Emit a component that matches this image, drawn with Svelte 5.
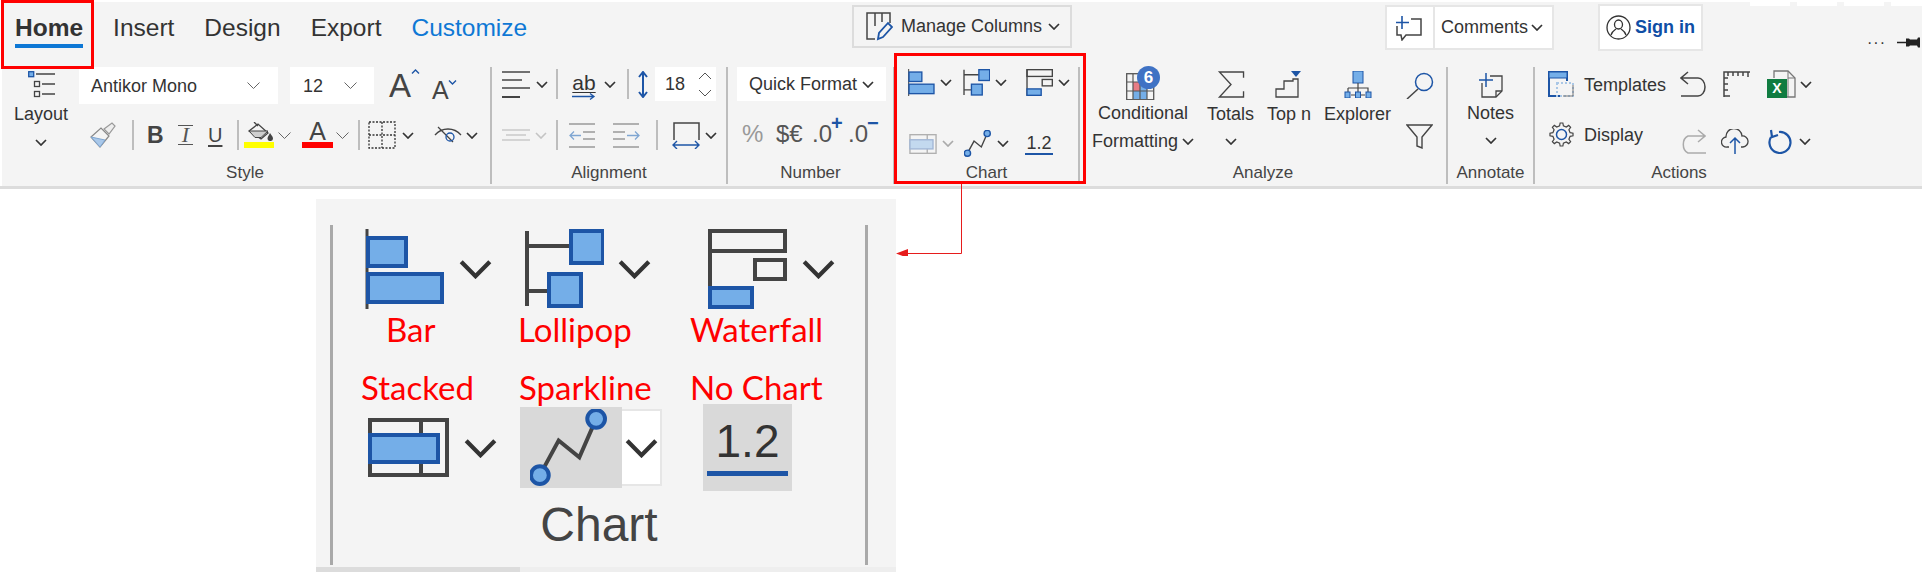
<script>
  const gear = (() => {
    const pts = [];
    const teeth = 8;
    for (let i = 0; i < teeth; i++) {
      const a = (i / teeth) * Math.PI * 2;
      const s = Math.PI / teeth;
      [[a - s * 0.55, 8.8], [a - s * 0.3, 11.6], [a + s * 0.3, 11.6], [a + s * 0.55, 8.8]].forEach(([t, r]) => {
        pts.push(`${(12.5 + r * Math.cos(t)).toFixed(2)} ${(12.5 + r * Math.sin(t)).toFixed(2)}`);
      });
    }
    return 'M' + pts.join('L') + 'Z';
  })();
</script>

{#snippet chev(cls = '')}
  <svg class="chev {cls}" width="12" height="7" viewBox="0 0 12 7"><path d="M1 1l5 5 5-5" /></svg>
{/snippet}

{#snippet thin()}
  <svg class="thinchev" width="13" height="7" viewBox="0 0 13 7"><path d="M.5.5l6 6 6-6" /></svg>
{/snippet}

{#snippet barIcon()}
  <svg viewBox="0 0 80 80">
    <path d="M2 0v80" stroke="#444" stroke-width="3" />
    <rect x="3" y="9" width="38" height="28" class="bl" />
    <rect x="3" y="45" width="74" height="28" class="bl" />
  </svg>
{/snippet}

{#snippet lollipopIcon()}
  <svg viewBox="0 0 80 80">
    <path d="M3 2v75M3 17h44M3 62h22" fill="none" stroke="#444" stroke-width="4" />
    <rect x="47" y="2" width="32" height="32" class="bl" />
    <rect x="25" y="45" width="32" height="32" class="bl" />
  </svg>
{/snippet}

{#snippet waterfallIcon()}
  <svg viewBox="0 0 80 80">
    <path d="M3 1v78" stroke="#444" stroke-width="4" />
    <rect x="3" y="2" width="75" height="20" class="gr" />
    <rect x="48" y="31" width="30" height="19" class="gr" />
    <rect x="3" y="59" width="42" height="19" class="bl" />
  </svg>
{/snippet}

{#snippet stackedIcon()}
  <svg viewBox="0 0 81 59">
    <rect x="2" y="2" width="77" height="55" class="gr" />
    <path d="M53 2v55" stroke="#444" stroke-width="4" />
    <rect x="2" y="17" width="68" height="27" class="bl" />
  </svg>
{/snippet}

{#snippet sparkIcon()}
  <svg viewBox="0 0 78 78">
    <path d="M10 67L29 32 50 49 67 10" fill="none" stroke="#444" stroke-width="4" />
    <circle cx="10" cy="67" r="9" class="bl" />
    <circle cx="67" cy="10" r="9" class="bl" />
  </svg>
{/snippet}

<div class="page">
  <header class="ribbon">
    <div class="topbar">
      <nav class="tabs">
        <span class="tab active">Home</span>
        <span class="tab">Insert</span>
        <span class="tab">Design</span>
        <span class="tab">Export</span>
        <span class="tab custom">Customize</span>
      </nav>
      <button class="manage">
        <svg width="27" height="29" viewBox="0 0 27 29">
          <path d="M9 27H1V1h23v10M9 1v13M16 1v9" fill="none" stroke="#444" stroke-width="1.5" />
          <path d="M12 27l1-6 9-10 4 4-9 10z" fill="#f4f4f4" stroke="#1d55a6" stroke-width="1.8" />
        </svg>
        <span>Manage Columns</span>
        {@render chev()}
      </button>
      <div class="comments">
        <span class="cicon">
          <svg width="28" height="26" viewBox="0 0 28 26">
            <path d="M16 4h10v16H11l-4 5-1-5H2v-9" fill="none" stroke="#444" stroke-width="1.5" />
            <path d="M7 1v13M1 7.500h13" stroke="#1d55a6" stroke-width="1.6" />
          </svg>
        </span>
        <span class="ctext">Comments{@render chev()}</span>
      </div>
      <div class="signin">
        <svg width="25" height="25" viewBox="0 0 25 25" fill="none" stroke="#333" stroke-width="1.3">
          <circle cx="12.500" cy="12.500" r="11.500" />
          <ellipse cx="12.500" cy="9.500" rx="4" ry="4.500" />
          <path d="M5 20c1-4 4-5 5-6M20 20c-1-4-4-5-5-6" />
        </svg>
        <span>Sign in</span>
      </div>
      <div class="more">
        <span class="dots">···</span>
        <svg width="24" height="11" viewBox="0 0 24 11"><path d="M0 5.500h9" stroke="#222" stroke-width="1.5" /><path d="M9 1.500h3l1 1h7l1-2h2v10h-2l-1-2h-7l-1 1H9z" fill="#222" /></svg>
      </div>
    </div>
    <div class="blanks"><i></i><i></i><i></i><i></i></div>

    <div class="groups">
      <section class="group style">
        <div class="gbody stylebody">
          <div class="tool layout">
            <svg width="27" height="27" viewBox="0 0 27 27" fill="none" stroke="#444" stroke-width="1.300">
              <rect x=".7" y=".7" width="5" height="5" fill="#74aee8" stroke="#1d55a6" />
              <path d="M8 3h19M14 13h13M14 23h13" />
              <rect x="6.500" y="10.500" width="5" height="5" />
              <rect x="6.500" y="20.500" width="5" height="5" />
            </svg>
            <span>Layout</span>
            {@render chev()}
          </div>
          <div class="stack">
            <div class="row s1">
              <div class="select font"><span>Antikor Mono</span>{@render thin()}</div>
              <div class="select size"><span>12</span>{@render thin()}</div>
              <span class="grow big">A<svg width="9" height="5" viewBox="0 0 9 5"><path d="M1 4.500l3.500-3.500 3.500 3.500" fill="none" stroke="#1d55a6" stroke-width="1.400" /></svg></span>
              <span class="grow small">A<svg width="9" height="5" viewBox="0 0 9 5"><path d="M1 .5l3.500 3.500 3.500-3.500" fill="none" stroke="#1d55a6" stroke-width="1.400" /></svg></span>
            </div>
            <div class="row s2">
              <svg width="26" height="27" viewBox="0 0 26 27">
                <path d="M1 15l10-9 8 8-9 11z" fill="#f4f4f4" stroke="#888" stroke-width="1.200" />
                <path d="M1 15l14 3-5 7z" fill="#a9c8ea" stroke="#7fa6d2" />
                <path d="M14 7l8-6 3 3-6 8z" fill="#eee" stroke="#999" stroke-width="1.200" />
              </svg>
              <i class="sep"></i>
              <b class="fmt bold">B</b>
              <span class="fmt ital">I</span>
              <span class="fmt under">U</span>
              <i class="sep"></i>
              <span class="swatch">
                <svg width="27" height="19" viewBox="0 0 27 19">
                  <path d="M3 9l9-7 10 9-7 6z" fill="none" stroke="#444" stroke-width="1.300" />
                  <path d="M3 9h19l-7 6.500H9z" fill="#cfcfcf" stroke="#444" />
                  <path d="M8 0l4 4" stroke="#444" stroke-width="1.300" />
                  <path d="M24 11c2 3 3 4 3 5.500a2.700 2.500 0 0 1-5.500 0c0-1.500 1-2.500 2.500-5.500z" fill="#444" />
                </svg>
                <i class="yellow"></i>
              </span>
              {@render thin()}
              <span class="swatch redA">
                <span class="colorA">A</span>
                <i class="red"></i>
              </span>
              {@render thin()}
              <i class="sep"></i>
              <svg width="28" height="28" viewBox="0 0 28 28" fill="none" stroke="#333" stroke-width="1.300" stroke-dasharray="2 1.500">
                <rect x="1" y="1" width="26" height="26" />
                <path d="M14 1v26M1 14h26" />
              </svg>
              {@render chev()}
              <svg width="28" height="18" viewBox="0 0 28 18" fill="none" stroke="#444" stroke-width="1.300">
                <path d="M1 9c7-8 19-8 26 0" />
                <path d="M4 1l15 15" />
                <circle cx="16" cy="11" r="4" stroke="#1d55a6" />
              </svg>
              {@render chev()}
            </div>
          </div>
        </div>
        <footer>Style</footer>
      </section>

      <section class="group">
        <div class="stack">
          <div class="row a1">
            <svg width="28" height="27" viewBox="0 0 28 27" stroke="#444" stroke-width="1.500"><path d="M0 1h28M0 9h20M0 17h28" /><path d="M0 26h18" stroke-width="2" /></svg>
            {@render chev()}
            <i class="sep"></i>
            <span class="ab">ab<svg width="24" height="7" viewBox="0 0 24 7"><path d="M0 3.500h22M18 .5l4 3-4 3" fill="none" stroke="#1d55a6" stroke-width="1.300" /></svg></span>
            {@render chev()}
            <i class="sep"></i>
            <svg width="10" height="27" viewBox="0 0 10 27"><path d="M5 1v25M1 6l4-5 4 5M1 21l4 5 4-5" fill="none" stroke="#1d55a6" stroke-width="2" /></svg>
            <div class="select spin"><span>18</span>
              <svg width="14" height="25" viewBox="0 0 14 25" fill="none" stroke="#555"><path d="M1 7l6-6 6 6M1 18l6 6 6-6" /></svg>
            </div>
          </div>
          <div class="row a2">
            <svg class="faded" width="28" height="12" viewBox="0 0 28 12" stroke="#888" stroke-width="1.500"><path d="M0 1h28M4 6h20M0 11h28" /></svg>
            <svg class="faded" width="12" height="7" viewBox="0 0 12 7"><path d="M1 1l5 5 5-5" fill="none" stroke="#777" stroke-width="1.600" /></svg>
            <i class="sep"></i>
            <svg width="26" height="25" viewBox="0 0 26 25" fill="none"><path d="M0 1h26M0 24h26M14 9h12M14 16h12" stroke="#999" stroke-width="1.400" /><path d="M12 12.500H1M5 8.500l-4 4 4 4" stroke="#7fa6d2" stroke-width="1.300" /></svg>
            <svg width="27" height="25" viewBox="0 0 27 25" fill="none"><path d="M0 1h26M0 24h26M0 9h12M0 16h12" stroke="#999" stroke-width="1.400" /><path d="M14 12.500h12M22 8.500l4 4-4 4" stroke="#7fa6d2" stroke-width="1.300" /></svg>
            <i class="sep"></i>
            <svg width="28" height="27" viewBox="0 0 28 27" fill="none"><path d="M2 18V1h25v17" stroke="#444" stroke-width="1.500" /><path d="M1 23h26M5 19l-4 4 4 4M23 19l4 4-4 4" stroke="#1d55a6" stroke-width="1.400" /></svg>
            {@render chev()}
          </div>
        </div>
        <footer>Alignment</footer>
      </section>

      <section class="group">
        <div class="stack">
          <div class="row n1">
            <div class="select quick"><span>Quick Format</span>{@render chev()}</div>
          </div>
          <div class="row n2">
            <span class="num pct">%</span>
            <span class="num">$€</span>
            <span class="num">.0<b class="sup">+</b></span>
            <span class="num">.0<b class="sup">−</b></span>
          </div>
        </div>
        <footer>Number</footer>
      </section>

      <section class="group">
        <div class="stack chart">
          <div class="row c1">
            <span class="mini">{@render barIcon()}</span>
            {@render chev()}
            <span class="mini">{@render lollipopIcon()}</span>
            {@render chev()}
            <span class="mini">{@render waterfallIcon()}</span>
            {@render chev()}
          </div>
          <div class="row c2">
            <span class="mini stacked faded">{@render stackedIcon()}</span>
            <span class="faded">{@render chev()}</span>
            <span class="mini">{@render sparkIcon()}</span>
            {@render chev()}
            <span class="nochart">1.2</span>
          </div>
        </div>
        <footer>Chart</footer>
      </section>

      <section class="group">
        <div class="gbody analyze">
          <div class="tool">
            <span class="cf">
              <svg width="34" height="30" viewBox="0 0 34 30">
                <rect x=".7" y="3.700" width="27" height="26" fill="#f4f4f4" stroke="#555" stroke-width="1.300" />
                <rect x="7" y="12" width="7" height="9" fill="#e87c85" />
                <rect x="14" y="12" width="7" height="9" fill="#74aee8" />
                <rect x="7" y="21" width="14" height="8" fill="#74aee8" />
                <path d="M7 4v25M14 4v25M21 4v25M1 12h26M1 21h26" stroke="#555" stroke-width="1.200" />
              </svg>
              <b>6</b>
            </span>
            <span>Conditional</span>
            <span class="line2">Formatting{@render chev()}</span>
          </div>
          <div class="tool">
            <svg width="28" height="28" viewBox="0 0 28 28"><path d="M27 7V1H2l12 13L2 27h25v-6" fill="none" stroke="#444" stroke-width="1.400" /></svg>
            <span>Totals</span>
            <span class="line2 c">{@render chev()}</span>
          </div>
          <div class="tool">
            <svg width="28" height="27" viewBox="0 0 28 27"><path d="M1 26V18h8v-8h9v-2h5v18z" fill="none" stroke="#444" stroke-width="1.300" /><path d="M16 0h10l-5 6z" fill="#1d55a6" /></svg>
            <span>Top n</span>
          </div>
          <div class="tool">
            <svg width="28" height="27" viewBox="0 0 28 27">
              <rect x="9" y="0" width="10" height="12" fill="#74aee8" stroke="#1d55a6" />
              <path d="M14 12v9M4 17h20v4M4 17v4" fill="none" stroke="#444" stroke-width="1.200" />
              <path d="M7 24h14" stroke="#444" />
              <rect x="1" y="21" width="5" height="6" fill="#74aee8" stroke="#1d55a6" />
              <rect x="11.500" y="21" width="5" height="6" fill="#74aee8" stroke="#1d55a6" />
              <rect x="22" y="21" width="5" height="6" fill="#74aee8" stroke="#1d55a6" />
            </svg>
            <span>Explorer</span>
          </div>
          <div class="pair">
            <svg width="28" height="27" viewBox="0 0 28 27" fill="none"><circle cx="18" cy="10" r="8.500" stroke="#1d55a6" stroke-width="1.500" /><path d="M12 17L1 27" stroke="#444" stroke-width="1.500" /></svg>
            <svg width="27" height="25" viewBox="0 0 27 25"><path d="M1 1h25L16 13v11l-5-2V13z" fill="#f4f4f4" stroke="#444" stroke-width="1.400" /></svg>
          </div>
        </div>
        <footer>Analyze</footer>
      </section>

      <section class="group">
        <div class="gbody notes">
          <div class="tool">
            <svg width="24" height="25" viewBox="0 0 24 25" fill="none">
              <path d="M11 3h12v15l-6 6H3V10" stroke="#444" stroke-width="1.300" />
              <path d="M23 18h-6v6" stroke="#444" stroke-width="1.300" />
              <path d="M7 0v14M0 7h14" stroke="#1d55a6" stroke-width="1.500" />
            </svg>
            <span>Notes</span>
            <span class="line2 c">{@render chev()}</span>
          </div>
        </div>
        <footer>Annotate</footer>
      </section>

      <section class="group last">
        <div class="stack">
          <div class="row r1">
            <svg width="27" height="26" viewBox="0 0 27 26">
              <path d="M14 25H2V1h18v9" fill="none" stroke="#1d55a6" stroke-width="2" />
              <rect x="2" y="1" width="18" height="6" fill="#74aee8" stroke="#1d55a6" />
              <rect x="10" y="12" width="16" height="13" fill="none" stroke="#aac7e6" stroke-dasharray="2 2" stroke-width="2" />
              <path d="M16 25h10V14" fill="none" stroke="#777" />
            </svg>
            <span class="t">Templates</span>
            <svg width="26" height="26" viewBox="0 0 26 26" fill="none" stroke="#444" stroke-width="1.500"><path d="M8 1L1 7l7 6M1 7h17a7 9 0 0 1 0 18H1" /></svg>
            <svg width="27" height="26" viewBox="0 0 27 26" fill="none" stroke="#444" stroke-width="1.500"><path d="M1 26V1h26M1 25h6M5 1v4M10 1v4M15 1v4M20 1v4M25 1v5M1 7h4M1 13h4M1 19h4" /></svg>
            <span class="excel">
              <svg width="29" height="28" viewBox="0 0 29 28"><path d="M7 8V1h14l7 7v19H8" fill="#f4f4f4" stroke="#777" stroke-width="1.300" /><path d="M21 1v7h7M21 8v19" fill="none" stroke="#777" /></svg>
              <b>X</b>
            </span>
            {@render chev()}
          </div>
          <div class="row r2">
            <svg width="25" height="25" viewBox="0 0 25 25" fill="none" stroke="#444" stroke-width="1.200"><path d={gear} /><circle cx="12.500" cy="12.500" r="5" stroke="#1d55a6" stroke-width="1.500" /></svg>
            <span class="t">Display</span>
            <svg class="low" width="26" height="25" viewBox="0 0 26 25" fill="none" stroke="#aaa" stroke-width="1.500"><path d="M18 1l7 6-7 6M25 7H8a7 9 0 0 0 0 17h18" /></svg>
            <svg class="low" width="28" height="25" viewBox="0 0 28 25" fill="none"><path d="M8 18H6a5 5 0 0 1-1-10 8 8 0 0 1 16-1 5.500 5.500 0 0 1 1 11h-2" stroke="#444" stroke-width="1.300" /><path d="M14 25V9M9 14l5-5 5 5" stroke="#1d55a6" stroke-width="1.500" /></svg>
            <svg class="low" width="25" height="25" viewBox="0 0 25 25" fill="none" stroke="#1d55a6" stroke-width="2.200"><path d="M11 3a10.500 10.500 0 1 1-8 5M3 1l1 7 6-2" /></svg>
            {@render chev('lowchev')}
          </div>
        </div>
        <footer>Actions</footer>
      </section>
    </div>
  </header>

  <section class="zoom">
    <div class="zoomframe">
      <div class="tiles">
        <div class="tile bar">
          <div class="glyphs"><span class="big-i b1">{@render barIcon()}</span>{@render chev('huge')}</div>
          <div class="name lbar">Bar</div>
        </div>
        <div class="tile lol">
          <div class="glyphs"><span class="big-i b1">{@render lollipopIcon()}</span>{@render chev('huge')}</div>
          <div class="name">Lollipop</div>
        </div>
        <div class="tile wat">
          <div class="glyphs"><span class="big-i b1">{@render waterfallIcon()}</span>{@render chev('huge')}</div>
          <div class="name">Waterfall</div>
        </div>
        <div class="tile sta">
          <div class="name">Stacked</div>
          <div class="glyphs tall"><span class="big-i b2">{@render stackedIcon()}</span>{@render chev('huge')}</div>
        </div>
        <div class="tile spa">
          <div class="name">Sparkline</div>
          <div class="glyphs tall">
            <span class="sparkbox">{@render sparkIcon()}</span>
            <span class="sparkchev">{@render chev('huge')}</span>
          </div>
        </div>
        <div class="tile noc">
          <div class="name">No Chart</div>
          <div class="glyphs tall"><span class="numbox">1.2</span></div>
        </div>
      </div>
      <div class="charttitle">Chart</div>
    </div>
    <div class="zoomfoot"></div>
  </section>

  <div class="mark home"></div>
  <div class="mark chartbox"></div>
  <svg class="connector" width="70" height="72" viewBox="0 0 70 72">
    <path d="M65.500 0v69.500H10" fill="none" stroke="#e61c1c" stroke-width="1" />
    <path d="M0 69.500L12 65v9z" fill="#e61c1c" />
  </svg>
</div>

<style>
  :global(body) {
    margin: 0;
    background: #fff;
  }
  .page {
    position: relative;
    width: 1922px;
    height: 572px;
    overflow: hidden;
    font-family: "Liberation Sans", Arial, sans-serif;
    color: #333;
    font-size: 18px;
  }
  .ribbon {
    position: relative;
    top: 2px;
    height: 184px;
    background: #f4f4f4;
    border-bottom: 3px solid #dcdcdc;
    box-shadow: inset 2px 0 #fff;
  }
  .topbar {
    display: grid;
    grid-template-columns: 852px 533px 213px 105px 1fr;
    align-items: start;
    height: 65px;
  }
  .tabs {
    display: flex;
    gap: 30px;
    padding: 12px 0 0 15px;
    font-size: 24.5px;
    line-height: 28px;
  }
  .tab.active {
    font-weight: 700;
    border-bottom: 4px solid #0e78d5;
    padding-bottom: 2px;
    height: 28px;
  }
  .custom {
    color: #0e78d5;
  }
  .manage {
    display: flex;
    align-items: center;
    box-sizing: border-box;
    width: 220px;
    height: 43px;
    margin: 3px 0 0;
    padding: 0 0 0 12px;
    background: #f4f4f4;
    border: 2px solid #dcdcdc;
    font: inherit;
    color: inherit;
  }
  .manage span {
    margin: 0 6px 0 8px;
  }
  .comments {
    display: flex;
    box-sizing: border-box;
    width: 169px;
    height: 45px;
    margin-top: 3px;
    background: #fff;
    border: 2px solid #e6e6e6;
  }
  .cicon {
    display: flex;
    align-items: center;
    padding-left: 8px;
    width: 38px;
    border-right: 2px solid #e6e6e6;
  }
  .ctext {
    display: flex;
    align-items: center;
    gap: 3px;
    padding-left: 6px;
  }
  .signin {
    display: flex;
    align-items: center;
    gap: 4px;
    box-sizing: border-box;
    width: 105px;
    height: 47px;
    margin-top: 2px;
    padding-left: 6px;
    background: #fff;
    border: 2px solid #e6e6e6;
    color: #0f4ea5;
    font-weight: 700;
  }
  .more {
    display: flex;
    align-items: center;
    gap: 11px;
    margin: 35px 0 0 164px;
  }
  .dots {
    font-size: 16px;
    letter-spacing: 1px;
    line-height: 11px;
  }
  .blanks {
    position: absolute;
    top: -2px;
    left: 1750px;
    display: flex;
    gap: 7px;
  }
  .blanks i {
    width: 40px;
    height: 6px;
    background: #fff;
  }
  .groups {
    display: flex;
    height: 117px;
  }
  .group {
    box-sizing: border-box;
    display: flex;
    flex-direction: column;
    border-right: 2px solid #bdbdbd;
    flex: none;
    width: 236px;
  }
  .group:nth-child(1) { width: 492px; }
  .group:nth-child(3) { width: 167px; }
  .group:nth-child(4) { width: 185px; }
  .group:nth-child(5) { width: 368px; }
  .group:nth-child(6) { width: 87px; }
  .group.last { width: 288px; border-right: 0; }
  footer {
    height: 20px;
    margin-top: auto;
    margin-bottom: 1px;
    text-align: center;
    font-size: 17px;
    line-height: 20px;
    color: #444;
  }
  .gbody, .stack {
    display: grid;
  }
  .stylebody {
    grid-template-columns: 79px 1fr;
  }
  .stack {
    align-content: start;
    row-gap: 19px;
  }
  .tool {
    display: flex;
    flex-direction: column;
    align-items: center;
    padding-top: 4px;
    line-height: 20px;
  }
  .tool > svg:not(.chev), .tool > .cf {
    height: 27px;
  }
  .tool > span:not(.cf) {
    margin-top: 6px;
  }
  .tool > :global(.chev) {
    margin-top: 15px;
  }
  .layout {
    padding-left: 14px;
    width: 54px;
  }
  .line2 {
    display: flex;
    align-items: center;
    gap: 4px;
    height: 24px;
    margin-top: 6px !important;
  }
  .line2.c {
    margin-top: 5px !important;
  }
  .row {
    display: grid;
    align-items: center;
    justify-items: start;
  }
  .s1 { grid-template-columns: 211px 99px 43px 1fr; height: 37px; }
  .s1 .select span { padding-top: 2px; }
  .s2 {
    grid-template-columns: 42px 15px 31px 30px 29px 7px 34px 24px 34px 22px 10px 34px 32px 32px 1fr;
    padding-left: 11px;
    height: 30px;
    margin-top: -3px;
  }
  .a1 { grid-template-columns: 34px 20px 16px 32px 23px 11px 17px 1fr; padding-left: 10px; height: 34px; }
  .a2 { grid-template-columns: 33px 21px 13px 44px 43px 16px 33px 1fr; padding-left: 10px; height: 26px; }
  .n1 { padding-left: 9px; height: 34px; }
  .n2 { grid-template-columns: 34px 36px 36px 1fr; padding-left: 14px; height: 26px; }
  .c1 { grid-template-columns: 32px 23px 32px 31px 32px 1fr; padding-left: 13px; height: 27px; margin-top: 2px; }
  .c2 { grid-template-columns: 33px 22px 33px 28px 1fr; padding-left: 14px; height: 27px; }
  .chart { row-gap: 34px; }
  .analyze {
    grid-template-columns: 115px 60px 57px 82px 1fr;
    justify-items: start;
    padding-left: 12px;
  }
  .pair {
    display: flex;
    flex-direction: column;
    gap: 25px;
    padding-top: 5px;
  }
  .notes {
    justify-items: center;
  }
  .notes svg:not(.chev) {
    margin-top: 1px;
  }
  .notes .tool > span:not(.line2) {
    margin-top: 4px;
  }
  .r1 { grid-template-columns: 37px 96px 43px 44px 33px 1fr; padding-left: 12px; height: 28px; margin-top: 3px; }
  .r1 .t { padding-top: 2px; }
  .r2 {
    grid-template-columns: 35px 96px 41px 47px 31px 1fr;
    align-items: start;
    padding-left: 14px;
    height: 32px;
    margin-top: 5px;
  }
  .low { margin-top: 7px; }
  .r2 :global(.lowchev) { margin-top: 16px; }
  .t { line-height: 22px; }
  .r2 .t { margin-top: 2px; }
  .sep {
    display: block;
    width: 2px;
    height: 30px;
    background: #bdbdbd;
  }
  .select {
    display: flex;
    align-items: center;
    justify-content: space-between;
    box-sizing: border-box;
    height: 100%;
    background: #fff;
  }
  .font { width: 199px; padding: 0 18px 0 12px; }
  .size { width: 84px; padding: 0 17px 0 13px; }
  .spin { width: 61px; padding: 0 4px 0 10px; }
  .quick { width: 149px; padding: 0 12px 0 12px; }
  .grow {
    display: flex;
    align-items: flex-start;
    color: #444;
    font-weight: 400;
    line-height: 1;
  }
  .grow.big { font-size: 33px; }
  .grow.small { font-size: 25px; margin-top: 9px; }
  .grow.small svg { margin: 2px 0 0 -1px; }
  .fmt {
    font-size: 22px;
    line-height: 1;
    color: #444;
  }
  .bold { font-size: 23px; }
  .ital {
    box-sizing: border-box;
    width: 15px;
    font-family: "Liberation Serif", serif;
    font-style: italic;
    font-size: 22px;
    line-height: 18px;
    text-align: center;
    color: #555;
    border-top: 1px solid #555;
    border-bottom: 1px solid #555;
  }
  .under { text-decoration: underline; font-size: 20px; text-underline-offset: 3px; }
  .swatch {
    display: flex;
    flex-direction: column;
    align-items: center;
    width: 30px;
  }
  .redA { width: 31px; }
  .colorA { font-size: 25px; line-height: 19px; color: #444; }
  .yellow, .red {
    display: block;
    width: 30px;
    height: 6px;
    margin-top: 1px;
    background: #ffff00;
  }
  .red { background: #ff0000; width: 31px; }
  .ab {
    display: flex;
    flex-direction: column;
    align-items: center;
    font-size: 21px;
    line-height: 17px;
    text-decoration: underline;
    text-decoration-thickness: 1px;
    text-underline-offset: 2px;
    margin-top: 5px;
  }
  .ab svg { margin-top: 2px; }
  .faded { opacity: .38; }
  .num {
    position: relative;
    font-size: 24px;
    color: #555;
    white-space: nowrap;
  }
  .pct { color: #999; }
  .sup {
    position: absolute;
    top: -8px;
    left: 19px;
    font-size: 20px;
    color: #1d55a6;
  }
  .mini { display: block; width: 27px; height: 27px; }
  .mini svg { display: block; width: 100%; height: 100%; }
  .mini .bl, .big-i .bl, .sparkbox .bl { fill: #74aee8; stroke: #1d55a6; stroke-width: 4; }
  .mini .gr, .big-i .gr { fill: none; stroke: #444; stroke-width: 4; }
  .mini.stacked { width: 28px; height: 20px; }
  .nochart {
    font-size: 18px;
    border-bottom: 2px solid #1d55a6;
    width: 28px;
    text-align: center;
    line-height: 20px;
    color: #333;
  }
  .cf {
    position: relative;
    display: block;
    margin-top: -1px;
  }
  .cf b {
    position: absolute;
    top: -4px;
    left: 11px;
    width: 23px;
    height: 23px;
    border-radius: 50%;
    background: #3f72c4;
    color: #fff;
    font-size: 17px;
    line-height: 23px;
    text-align: center;
  }
  .cf svg { display: block; }
  .excel { position: relative; display: block; width: 29px; height: 28px; }
  .excel svg { display: block; }
  .excel b {
    position: absolute;
    left: 0;
    top: 9px;
    width: 20px;
    height: 19px;
    background: #107c41;
    color: #fff;
    font-size: 14px;
    line-height: 19px;
    text-align: center;
  }
  .chev { display: block; }
  .chev path {
    fill: none;
    stroke: #333;
    stroke-width: 1.700;
  }
  .thinchev { display: block; flex: none; }
  .thinchev path {
    fill: none;
    stroke: #666;
    stroke-width: 1;
  }

  /* Enlarged chart panel */
  .zoom {
    position: absolute;
    left: 316px;
    top: 199px;
    width: 580px;
    height: 373px;
    background: #f4f4f4;
    display: flex;
    flex-direction: column;
  }
  .zoomframe {
    box-sizing: border-box;
    width: 538px;
    height: 340px;
    margin: 26px 0 0 14px;
    border-left: 3px solid #a9a9a9;
    border-right: 3px solid #a9a9a9;
    padding-top: 4px;
  }
  .tiles {
    display: grid;
    grid-template-columns: 157px 172px 1fr;
    grid-template-rows: 141px auto;
    padding-left: 28px;
  }
  .glyphs {
    display: flex;
    align-items: center;
    height: 80px;
  }
  .glyphs.tall {
    height: 87px;
  }
  .big-i { display: block; }
  .big-i svg { display: block; width: 100%; height: 100%; }
  .big-i.b1 { width: 80px; height: 80px; }
  .big-i.b2 { width: 81px; height: 59px; }
  :global(svg.huge) {
    width: 35px;
    height: 20px;
  }
  :global(svg.huge) path {
    stroke-width: 1.500;
  }
  .name {
    font-family: Lato, "Liberation Sans", sans-serif;
    color: #f00;
    font-size: 33px;
    line-height: 34px;
    white-space: nowrap;
  }
  .tile.bar .glyphs { padding-left: 4px; }
  .tile.bar :global(svg.huge) { margin-left: 13px; }
  .lbar { padding-left: 25px; margin-top: 3px; }
  .tile.lol .glyphs { padding-left: 6px; }
  .tile.lol :global(svg.huge) { margin-left: 13px; }
  .tile.lol .name { margin-top: 3px; }
  .tile.wat .glyphs { padding-left: 17px; }
  .tile.wat :global(svg.huge) { margin-left: 14px; }
  .tile.wat .name { margin-top: 3px; }
  .tile.sta .glyphs { padding-left: 7px; }
  .tile.sta :global(svg.huge) { margin-left: 14px; }
  .spa .name { padding-left: 1px; }
  .spa .glyphs { padding-left: 2px; }
  .sparkbox {
    box-sizing: border-box;
    display: block;
    width: 102px;
    height: 81px;
    padding: 2px 0 0 10px;
    background: #d9d9d9;
  }
  .sparkbox svg { display: block; width: 77px; height: 77px; }
  .sparkchev {
    display: flex;
    align-items: center;
    justify-content: center;
    box-sizing: border-box;
    width: 40px;
    height: 77px;
    background: #fff;
    border: 2px solid #e6e6e6;
    border-left: 0;
  }
  .noc .glyphs { padding-left: 13px; }
  .numbox {
    box-sizing: border-box;
    width: 89px;
    height: 87px;
    padding: 8px 4px 0;
    background: #d9d9d9;
    font-size: 46px;
    line-height: 58px;
    text-align: center;
    color: #333;
    position: relative;
  }
  .numbox::after {
    content: "";
    position: absolute;
    left: 4px;
    right: 4px;
    top: 67px;
    height: 5px;
    background: #1d55a6;
  }
  .charttitle {
    margin-top: 9px;
    text-align: center;
    font-size: 48px;
    line-height: 50px;
    color: #444;
  }
  .zoomfoot {
    margin-top: auto;
    height: 5px;
    background: linear-gradient(to right, #dcdcdc 204px, #eeeeee 204px);
  }

  /* Red annotation overlays */
  .mark {
    position: absolute;
    box-sizing: border-box;
    border: 3px solid #f00;
    pointer-events: none;
  }
  .home { left: 1px; top: 0; width: 93px; height: 69px; }
  .chartbox { left: 894px; top: 53px; width: 192px; height: 131px; }
  .connector {
    position: absolute;
    left: 896px;
    top: 184px;
  }
</style>
